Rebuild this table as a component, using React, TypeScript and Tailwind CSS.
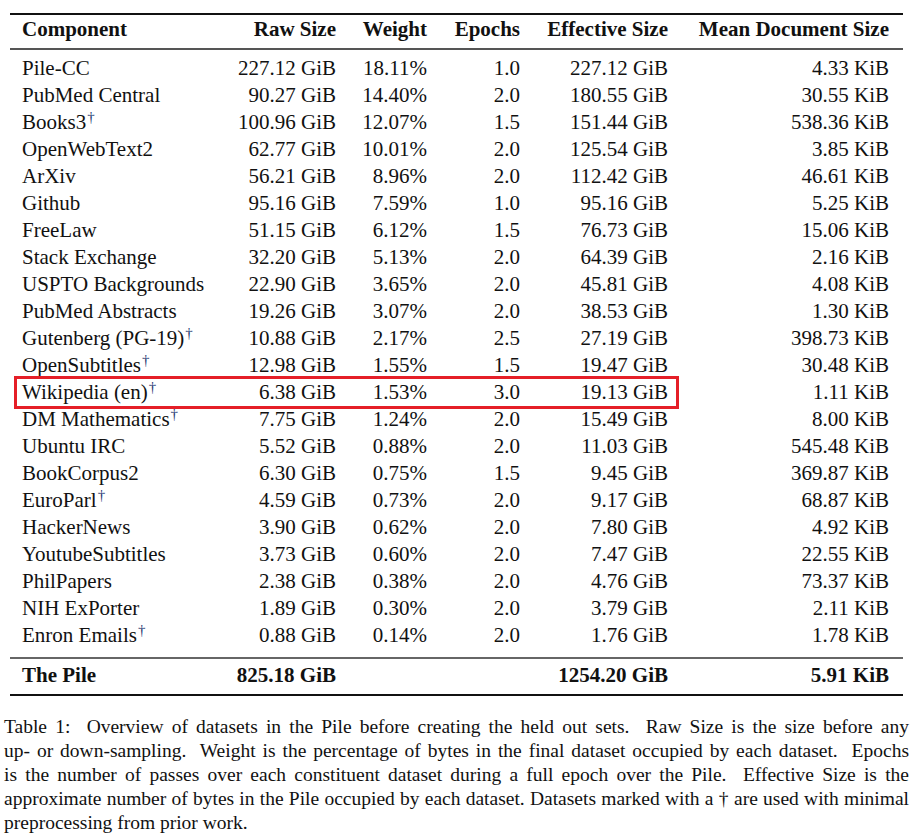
import React from "react";

interface Row {
  name: string;
  dagger?: boolean;
  raw: string;
  weight: string;
  epochs: string;
  effective: string;
  mean: string;
  highlight?: boolean;
}

const rows: Row[] = [
  { name: "Pile-CC", raw: "227.12 GiB", weight: "18.11%", epochs: "1.0", effective: "227.12 GiB", mean: "4.33 KiB" },
  { name: "PubMed Central", raw: "90.27 GiB", weight: "14.40%", epochs: "2.0", effective: "180.55 GiB", mean: "30.55 KiB" },
  { name: "Books3", dagger: true, raw: "100.96 GiB", weight: "12.07%", epochs: "1.5", effective: "151.44 GiB", mean: "538.36 KiB" },
  { name: "OpenWebText2", raw: "62.77 GiB", weight: "10.01%", epochs: "2.0", effective: "125.54 GiB", mean: "3.85 KiB" },
  { name: "ArXiv", raw: "56.21 GiB", weight: "8.96%", epochs: "2.0", effective: "112.42 GiB", mean: "46.61 KiB" },
  { name: "Github", raw: "95.16 GiB", weight: "7.59%", epochs: "1.0", effective: "95.16 GiB", mean: "5.25 KiB" },
  { name: "FreeLaw", raw: "51.15 GiB", weight: "6.12%", epochs: "1.5", effective: "76.73 GiB", mean: "15.06 KiB" },
  { name: "Stack Exchange", raw: "32.20 GiB", weight: "5.13%", epochs: "2.0", effective: "64.39 GiB", mean: "2.16 KiB" },
  { name: "USPTO Backgrounds", raw: "22.90 GiB", weight: "3.65%", epochs: "2.0", effective: "45.81 GiB", mean: "4.08 KiB" },
  { name: "PubMed Abstracts", raw: "19.26 GiB", weight: "3.07%", epochs: "2.0", effective: "38.53 GiB", mean: "1.30 KiB" },
  { name: "Gutenberg (PG-19)", dagger: true, raw: "10.88 GiB", weight: "2.17%", epochs: "2.5", effective: "27.19 GiB", mean: "398.73 KiB" },
  { name: "OpenSubtitles", dagger: true, raw: "12.98 GiB", weight: "1.55%", epochs: "1.5", effective: "19.47 GiB", mean: "30.48 KiB" },
  { name: "Wikipedia (en)", dagger: true, raw: "6.38 GiB", weight: "1.53%", epochs: "3.0", effective: "19.13 GiB", mean: "1.11 KiB", highlight: true },
  { name: "DM Mathematics", dagger: true, raw: "7.75 GiB", weight: "1.24%", epochs: "2.0", effective: "15.49 GiB", mean: "8.00 KiB" },
  { name: "Ubuntu IRC", raw: "5.52 GiB", weight: "0.88%", epochs: "2.0", effective: "11.03 GiB", mean: "545.48 KiB" },
  { name: "BookCorpus2", raw: "6.30 GiB", weight: "0.75%", epochs: "1.5", effective: "9.45 GiB", mean: "369.87 KiB" },
  { name: "EuroParl", dagger: true, raw: "4.59 GiB", weight: "0.73%", epochs: "2.0", effective: "9.17 GiB", mean: "68.87 KiB" },
  { name: "HackerNews", raw: "3.90 GiB", weight: "0.62%", epochs: "2.0", effective: "7.80 GiB", mean: "4.92 KiB" },
  { name: "YoutubeSubtitles", raw: "3.73 GiB", weight: "0.60%", epochs: "2.0", effective: "7.47 GiB", mean: "22.55 KiB" },
  { name: "PhilPapers", raw: "2.38 GiB", weight: "0.38%", epochs: "2.0", effective: "4.76 GiB", mean: "73.37 KiB" },
  { name: "NIH ExPorter", raw: "1.89 GiB", weight: "0.30%", epochs: "2.0", effective: "3.79 GiB", mean: "2.11 KiB" },
  { name: "Enron Emails", dagger: true, raw: "0.88 GiB", weight: "0.14%", epochs: "2.0", effective: "1.76 GiB", mean: "1.78 KiB" },
];

const cols = "grid grid-cols-[220px_118px_91px_93px_148px_223px]";

const caption = [
  "Table 1:  Overview of datasets in the Pile before creating the held out sets.  Raw Size is the size before any",
  "up- or down-sampling.  Weight is the percentage of bytes in the final dataset occupied by each dataset.  Epochs",
  "is the number of passes over each constituent dataset during a full epoch over the Pile.  Effective Size is the",
  "approximate number of bytes in the Pile occupied by each dataset. Datasets marked with a \u2020 are used with minimal",
];

// blue link-coloured dagger, as in the paper
function Dagger() {
  return <sup className="ml-[1px] text-[15px] text-[#1c3670] relative top-[-7px]">{"\u2020"}</sup>;
}

export default function App() {
  return (
    <div className="w-[920px] h-[838px] bg-white text-[#111] font-['Liberation_Serif',serif] pt-[13px]">
      <div className="ml-[10px] w-[893px]">
        {/* top rule */}
        <div className="h-[2px] bg-[#111]" />
        <div className={`${cols} h-[33px] items-center pb-[4px] text-[21px] font-bold leading-none`}>
          <div className="pl-[12px]">Component</div>
          <div className="pr-[12px] text-right">Raw Size</div>
          <div className="pr-[12px] text-right">Weight</div>
          <div className="pr-[12px] text-right">Epochs</div>
          <div className="pr-[12px] text-right">Effective Size</div>
          <div className="pr-[14px] text-right">Mean Document Size</div>
        </div>
        <div className="h-[1.5px] bg-[#555]" />
        <div className="h-[5px]" />
        {rows.map((r) => (
          <div key={r.name} className={`${cols} relative h-[27px] items-center text-[21px] leading-[27px]`}>
            <div className="pl-[12px] whitespace-nowrap">
              {r.name}
              {r.dagger && <Dagger />}
            </div>
            <div className="pr-[12px] text-right">{r.raw}</div>
            <div className="pr-[12px] text-right">{r.weight}</div>
            <div className="pr-[12px] text-right">{r.epochs}</div>
            <div className="pr-[12px] text-right">{r.effective}</div>
            <div className="pr-[14px] text-right">{r.mean}</div>
            {r.highlight && (
              <div className="absolute left-[4px] top-[-3px] w-[665px] h-[33px] border-[3px] border-[#e51f28]" />
            )}
          </div>
        ))}
        <div className="h-[8px]" />
        <div className="h-[2px] bg-[#666]" />
        <div className={`${cols} h-[35px] items-center text-[21px] font-bold`}>
          <div className="pl-[12px]">The Pile</div>
          <div className="pr-[12px] text-right">825.18 GiB</div>
          <div />
          <div />
          <div className="pr-[12px] text-right">1254.20 GiB</div>
          <div className="pr-[14px] text-right">5.91 KiB</div>
        </div>
        <div className="h-[2px] bg-[#111]" />
      </div>
      <div className="ml-[4px] w-[905px] mt-[19px] text-[19.5px] leading-[24px]">
        {caption.map((line) => (
          <div key={line} className="text-justify [text-align-last:justify] whitespace-pre-wrap">
            {line}
          </div>
        ))}
        <div>preprocessing from prior work.</div>
      </div>
    </div>
  );
}
